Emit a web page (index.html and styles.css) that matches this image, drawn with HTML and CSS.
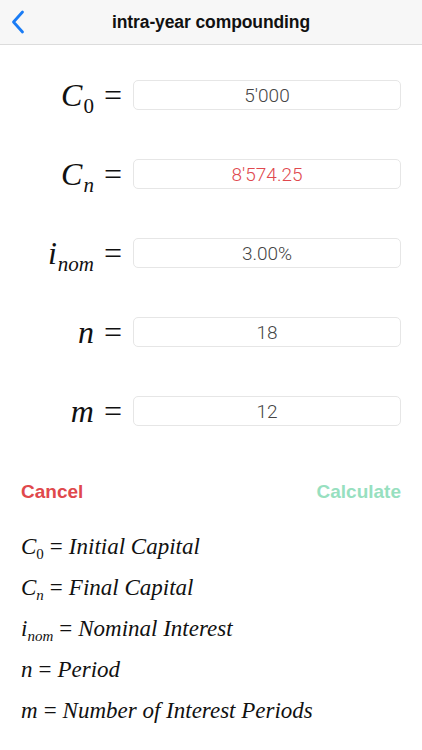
FILE: index.html
```html
<!DOCTYPE html>
<html>
<head>
<meta charset="utf-8">
<link rel="stylesheet" href="styles.css">
</head>
<body>
<div class="nav">
  <svg class="back" width="14" height="24" viewBox="0 0 14 24"><path d="M11.5 2 L2.5 12 L11.5 22" fill="none" stroke="#1a7cf5" stroke-width="2.8" stroke-linecap="round" stroke-linejoin="round"/></svg>
  <div class="title">intra-year compounding</div>
</div>
<div class="form">
  <div class="row">
    <div class="label"><span class="v">C</span><sub>0</sub><span class="eq">=</span></div>
    <div class="field">5'000</div>
  </div>
  <div class="row">
    <div class="label"><span class="v">C</span><sub class="i">n</sub><span class="eq">=</span></div>
    <div class="field red">8'574.25</div>
  </div>
  <div class="row">
    <div class="label"><span class="v">i</span><sub class="i">nom</sub><span class="eq">=</span></div>
    <div class="field">3.00%</div>
  </div>
  <div class="row">
    <div class="label"><span class="v">n</span><span class="eq">=</span></div>
    <div class="field">18</div>
  </div>
  <div class="row">
    <div class="label"><span class="v">m</span><span class="eq">=</span></div>
    <div class="field">12</div>
  </div>
</div>
<div class="actions">
  <span class="cancel">Cancel</span>
  <span class="calc">Calculate</span>
</div>
<div class="legend">
  <div class="line"><span class="v">C</span><sub>0</sub><span class="eq">=</span><span class="v">Initial Capital</span></div>
  <div class="line"><span class="v">C</span><sub class="i">n</sub><span class="eq">=</span><span class="v">Final Capital</span></div>
  <div class="line"><span class="v">i</span><sub class="i">nom</sub><span class="eq">=</span><span class="v">Nominal Interest</span></div>
  <div class="line"><span class="v">n</span><span class="eq">=</span><span class="v">Period</span></div>
  <div class="line"><span class="v">m</span><span class="eq">=</span><span class="v">Number of Interest Periods</span></div>
</div>
</body>
</html>
```
FILE: styles.css
```css
html, body { margin: 0; padding: 0; background: #fff; }
body { width: 422px; height: 750px; overflow: hidden; font-family: "Liberation Sans", Arial, sans-serif; }
.nav {
  height: 44px;
  background: #f7f7f7;
  border-bottom: 1px solid #dcdcdc;
  display: flex;
  align-items: center;
  justify-content: center;
  position: relative;
}
.back { position: absolute; left: 11px; top: 10px; }
.title { font-size: 17.5px; font-weight: bold; color: #111; letter-spacing: -0.1px; }
.form { display: flex; flex-direction: column; gap: 49px; padding-top: 35px; padding-right: 21px; }
.row { display: flex; align-items: center; height: 30px; }
.label {
  width: 122px;
  padding-right: 11px;
  text-align: right;
  font-family: "Liberation Serif", "Times New Roman", serif;
  font-size: 32px;
  color: #111;
  line-height: 30px;
  white-space: nowrap;
}
.label .v { font-style: italic; }
.label sub { font-size: 21px; vertical-align: -7px; line-height: 0; margin-left: 1px; }
.label sub.i { font-style: italic; }
.label .eq { margin-left: 10px; font-size: 32px; }
.field {
  flex: 1;
  height: 28px;
  border: 1px solid #e6e6e6;
  border-radius: 5px;
  display: flex;
  align-items: center;
  justify-content: center;
  font-family: Roboto, "Liberation Sans", sans-serif;
  font-weight: 300;
  font-size: 19px;
  color: #444;
}
.field.red { color: #e0484e; }
.actions {
  display: flex;
  justify-content: space-between;
  padding: 0 21px;
  margin-top: 55px;
  font-size: 19px;
  font-weight: bold;
  line-height: 22px;
}
.cancel { color: #e0484c; }
.calc { color: #97e0bf; }
.legend { padding: 31px 0 0 21px; display: flex; flex-direction: column; gap: 16px; }
.line {
  font-family: "Liberation Serif", "Times New Roman", serif;
  font-size: 23px;
  line-height: 25px;
  color: #111;
  white-space: nowrap;
}
.line .v { font-style: italic; }
.line sub { font-size: 15px; vertical-align: -5px; line-height: 0; }
.line sub.i { font-style: italic; }
.line .eq { margin: 0 6px; }
```
